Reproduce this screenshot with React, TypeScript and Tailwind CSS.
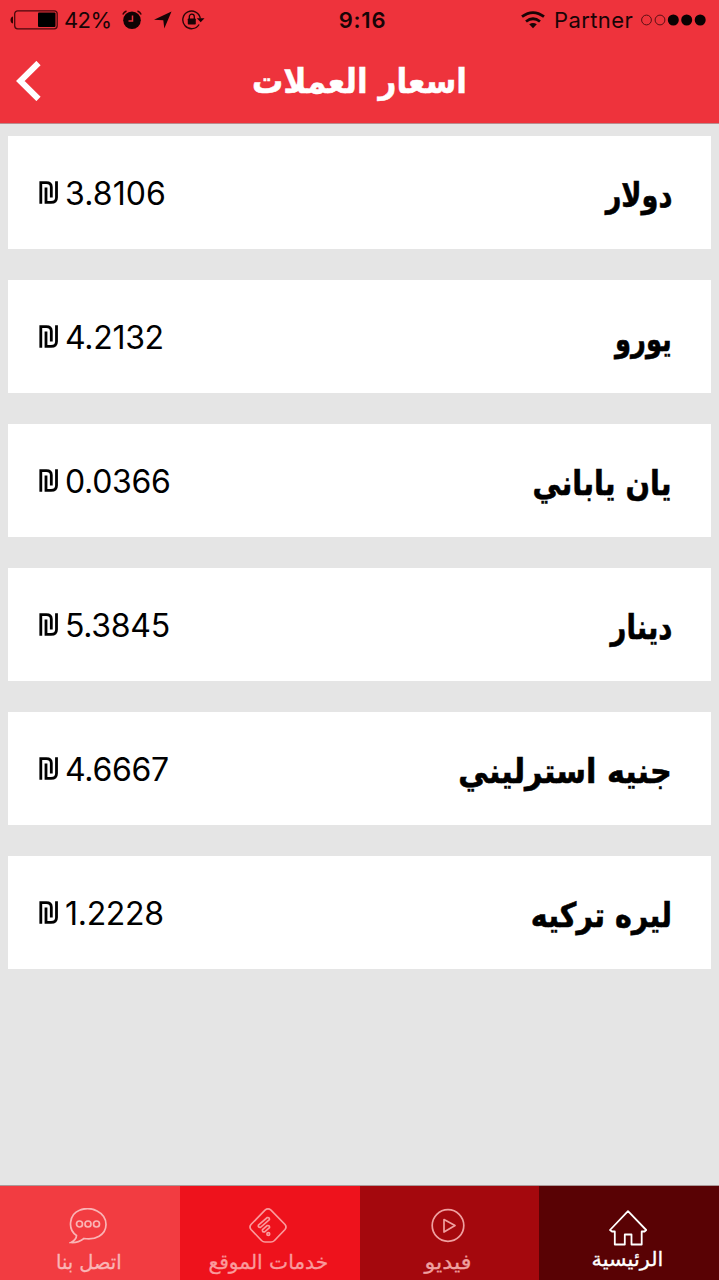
import type { ReactNode } from 'react';

const ARABIC = "font-['DejaVu_Sans',sans-serif]";

interface Rate {
  name: string;
  value: string;
  labelClass: string;
  valueClass: string;
}

const rates: Rate[] = [
  { name: 'دولار', value: '3.8106', labelClass: 'scale-x-[0.8]', valueClass: 'tracking-[0.1px]' },
  { name: 'يورو', value: '4.2132', labelClass: 'scale-x-[0.76]', valueClass: 'tracking-[-0.3px]' },
  { name: 'يان ياباني', value: '0.0366', labelClass: 'scale-x-[0.845]', valueClass: 'tracking-[-0.3px]' },
  { name: 'دينار', value: '5.3845', labelClass: 'scale-x-[0.81]', valueClass: 'tracking-[-0.3px]' },
  { name: 'جنيه استرليني', value: '4.6667', labelClass: 'scale-x-[0.89]', valueClass: 'tracking-[-0.3px]' },
  { name: 'ليره تركيه', value: '1.2228', labelClass: 'scale-x-[0.84]', valueClass: 'tracking-[-0.3px]' },
];

function Shekel() {
  return (
    <svg className="mb-0.5 h-[23px] w-5" viewBox="0 0 20 23" fill="none" stroke="black" strokeWidth="2.8" aria-label="₪">
      <path d="M2.800 22.800V1.700H8.300Q13.300 1.700 13.300 6V16.500" />
      <path d="M8 6.500V21.400H13Q18.500 21.400 18.500 16.500V.3" />
    </svg>
  );
}

function StatusBar() {
  return (
    <div className="grid h-10 grid-cols-3 items-center font-['Inter',sans-serif] text-[22px] leading-none text-[#180406]">
      <div className="flex items-center pl-2.5">
        <svg className="h-5 w-12" viewBox="0 0 48 20" fill="none">
          <path d="M3 6.5C1 7 .5 8.5.5 10S1 13 3 13.500Z" fill="#300" />
          <rect x="4.700" y=".8" width="42.500" height="18" rx="3" stroke="#4a090d" strokeWidth="1.300" />
          <rect x="28" y="2.500" width="17.500" height="14.500" rx="1" fill="black" />
        </svg>
        <span className="ml-1.5 w-[58px] tracking-[-0.6px]">42%</span>
        <svg className="h-5 w-5" viewBox="0 0 20 20">
          <circle cx="10" cy="10.200" r="8.800" fill="#100304" />
          <path d="M10.500 5.500V11H6.500" stroke="#ee333c" strokeWidth="1.500" fill="none" />
          <path d="M.8 4.500Q2 2 4.500 1M15.500 1Q18 2 19.200 4.500" stroke="#300" strokeWidth="1.500" fill="none" />
        </svg>
        <svg className="ml-3 h-[18px] w-[18px]" viewBox="0 0 18 18" fill="#180406">
          <path d="M17.500.5 10.300 17.500 9.300 9.200 0 8.800Z" />
        </svg>
        <svg className="ml-2.5 h-5 w-[23px]" viewBox="0 0 23 20" fill="none">
          <path d="M17.100 14.500A8.800 8.800 0 1 1 18.300 8.500" stroke="#2a0608" strokeWidth="1.400" />
          <path d="M14.800 8.200H22.500L18.700 12.300Z" fill="#180406" />
          <rect x="5.800" y="8.500" width="8" height="6" rx=".7" fill="#180406" />
          <path d="M7.300 9V6.700a2.500 2.500 0 0 1 5 0V9" stroke="#180406" strokeWidth="1.300" />
        </svg>
      </div>
      <div className="pl-1.5 text-center font-semibold tracking-[0.8px]">9:16</div>
      <div className="flex items-center justify-end pr-[13px]">
        <svg className="h-[18px] w-6" viewBox="0 0 24 18" fill="none" stroke="#180406" strokeWidth="2.800">
          <path d="M1 5.700Q12-2.500 23 5.700M5 10.500Q12 5 19 10.500" />
          <path d="M8.200 13.300Q12 10.500 15.800 13.300L12 17.200Z" fill="#180406" stroke="none" />
        </svg>
        <span className="ml-[9px] w-[87px] tracking-[0.4px]">Partner</span>
        <svg className="h-3 w-[65px]" viewBox="0 0 65 12" fill="#0a0202">
          <circle cx="5.500" cy="6" r="4.900" fill="none" stroke="#5a1014" />
          <circle cx="19" cy="6" r="4.900" fill="none" stroke="#5a1014" />
          <circle cx="32.300" cy="6" r="5.500" />
          <circle cx="45.700" cy="6" r="5.500" />
          <circle cx="59.200" cy="6" r="5.500" />
        </svg>
      </div>
    </div>
  );
}

function Tab({ color, label, labelClass, children }: { color: string; label: string; labelClass: string; children: ReactNode }) {
  return (
    <button className={`flex flex-col items-center ${color}`}>
      {children}
      <span dir="rtl" className={`whitespace-nowrap text-[20px] leading-6 [-webkit-text-stroke:0.3px] ${ARABIC} ${labelClass}`}>{label}</span>
    </button>
  );
}

export default function App() {
  return (
    <div className="flex h-[1280px] w-[719px] flex-col overflow-hidden bg-[#e5e5e5]">
      <header className="h-[124px] shrink-0 border-b border-[#b98c8e] bg-[#ee333c]">
        <StatusBar />
        <div className="grid h-[81px] grid-cols-[60px_1fr_60px] items-center">
          <button aria-label="رجوع" className="pl-4">
            <svg className="h-10 w-[25px]" viewBox="0 0 25 40" fill="none" stroke="white" strokeWidth="6">
              <path d="M22.500 2 4.300 20 22.500 38" />
            </svg>
          </button>
          <h1 dir="rtl" className={`scale-x-[0.915] text-center text-[34px] font-bold leading-[44px] text-white [-webkit-text-stroke:0.5px] ${ARABIC}`}>اسعار العملات</h1>
        </div>
      </header>
      <main className="flex flex-1 flex-col gap-[31px] px-2 pt-3">
        {rates.map((rate) => (
          <section key={rate.name} className="flex h-[113px] shrink-0 items-center justify-between bg-white pl-[30px] pr-[39px]">
            <div className="flex items-center pt-0.5 font-['Inter',sans-serif] text-[32px] leading-9 text-black">
              <Shekel />
              <span className={`ml-[7px] ${rate.valueClass}`}>{rate.value}</span>
            </div>
            <span dir="rtl" className={`origin-right whitespace-nowrap pt-1 text-[34px] font-bold leading-10 text-black [-webkit-text-stroke:0.6px] ${ARABIC} ${rate.labelClass}`}>{rate.name}</span>
          </section>
        ))}
      </main>
      <nav className="grid h-[95px] shrink-0 grid-cols-4 border-t border-[#a99] bg-[#ee121c]">
        <Tab color="bg-[#f23c41] text-[#fab4b5] pr-[3px]" label="اتصل بنا" labelClass="mt-1.5 scale-x-[0.97]">
          <svg className="mt-[22px] h-9 w-[38px]" viewBox="0 0 38 36" fill="none" stroke="currentColor" strokeWidth="1.700">
            <path d="M7.500 27.500C-2 21 .5 6 10.500 2.200 22-2.500 37 4 37 16.500 37 27 26 32.500 15 30.500Q9 35 2 34.500 7.500 31.500 7.500 27.500Z" />
            <circle cx="10.500" cy="16" r="3" />
            <circle cx="19" cy="16" r="3" />
            <circle cx="27.500" cy="16" r="3" />
          </svg>
        </Tab>
        <Tab color="bg-[#ee121c] text-[#fa9a9c] pr-[3px]" label="خدمات الموقع" labelClass="mt-1.5 scale-x-[1.01]">
          <svg className="mt-[22px] h-9 w-[38px]" viewBox="0 0 38 36" fill="none" stroke="currentColor" strokeWidth="1.700">
            <path d="M16 2.200Q19-.3 22 2.200L36 16.500Q38 19 36 21.500L25.500 32.500Q24 34 22 34H16Q14 34 12.500 32.500L2 21.500Q0 19 2 16.500Z" />
            <path d="M9.400 17.100 18.200 9.600Q20.600 9 20.400 11.600L11.600 19.300Q8.800 19.700 9.400 17.100ZM13.500 21.700 18.200 17.600Q20.800 17 20.500 19.700L15.800 23.800Q12.900 24.300 13.500 21.700Z" />
            <circle cx="19.300" cy="26" r="1.400" />
          </svg>
        </Tab>
        <Tab color="bg-[#a4080d] text-[#efa0a0] pr-[3px]" label="فيديو" labelClass="mt-1.5 scale-x-[1.12]">
          <svg className="mt-[22px] h-9 w-[38px]" viewBox="0 0 38 36" fill="none" stroke="currentColor" strokeWidth="1.700">
            <circle cx="19" cy="17.500" r="15.800" />
            <path d="M15 11.500 26 17.500 15 24Z" strokeLinejoin="round" />
          </svg>
        </Tab>
        <Tab color="bg-[#590204] text-white pr-[3px]" label="الرئيسية" labelClass="mt-px scale-x-[1.04]">
          <svg className="mt-6 h-9 w-[38px]" viewBox="0 0 38 36" fill="none" stroke="currentColor" strokeWidth="1.800" strokeLinejoin="round">
            <path d="M19 1.200 37.200 20 35.500 21.500H32.700V34.500H22.500V24.500H15.800V34.500H5.800V21.500H3L1 20Z" />
          </svg>
        </Tab>
      </nav>
    </div>
  );
}
